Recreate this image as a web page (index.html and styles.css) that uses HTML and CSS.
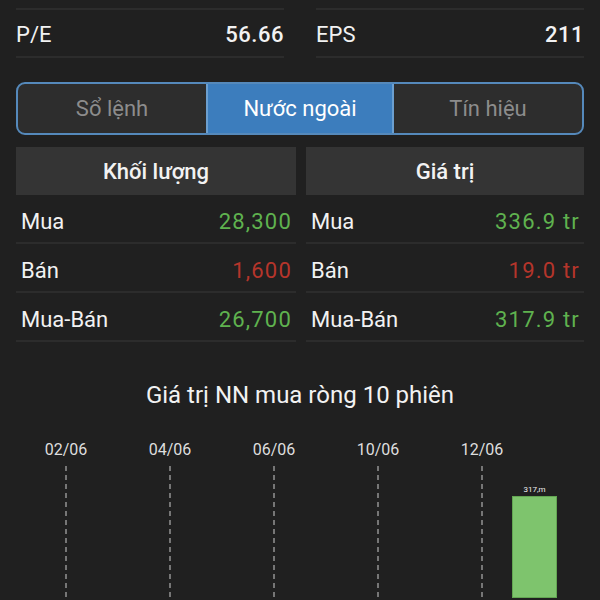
FILE: index.html
```html
<!DOCTYPE html>
<html lang="vi">
<head>
    <meta charset="UTF-8">
    <meta name="viewport" content="width=device-width, initial-scale=1.0">
    <title>Nước ngoài</title>
    <link rel="stylesheet" href="styles.css">
</head>
<body>
    <div class="stats">
        <div class="stat">
            <span>P/E</span>
            <b>56.66</b>
        </div>
        <div class="stat">
            <span>EPS</span>
            <b>211</b>
        </div>
    </div>

    <div class="tabs">
        <div class="tab">Sổ lệnh</div>
        <div class="tab active">Nước ngoài</div>
        <div class="tab">Tín hiệu</div>
    </div>

    <div class="foreign">
        <div class="col">
            <div class="head">Khối lượng</div>
            <div class="row"><span>Mua</span><span class="up">28,300</span></div>
            <div class="row"><span>Bán</span><span class="down">1,600</span></div>
            <div class="row"><span>Mua-Bán</span><span class="up">26,700</span></div>
        </div>
        <div class="col">
            <div class="head">Giá trị</div>
            <div class="row"><span>Mua</span><span class="up">336.9 tr</span></div>
            <div class="row"><span>Bán</span><span class="down">19.0 tr</span></div>
            <div class="row"><span>Mua-Bán</span><span class="up">317.9 tr</span></div>
        </div>
    </div>

    <h3 class="chart-title">Giá trị NN mua ròng 10 phiên</h3>
    <div class="chart">
        <div class="day"><p>02/06</p><i></i></div>
        <div class="day"><p>04/06</p><i></i></div>
        <div class="day"><p>06/06</p><i></i></div>
        <div class="day"><p>10/06</p><i></i></div>
        <div class="day"><p>12/06</p><i></i></div>
        <div class="bar" style="height: 102px;">
            <span>317,m</span>
        </div>
    </div>
</body>
</html>
```

FILE: styles.css
```css
* {
    padding: 0;
    margin: 0;
    box-sizing: border-box;
}
body {
    background-color: #202020;
    color: #f2f2f2;
    font-family: Roboto, "Noto Sans", sans-serif;
    width: 600px;
    height: 600px;
    overflow: hidden;
}
.stats {
    display: grid;
    grid-template-columns: 1fr 1fr;
    column-gap: 32px;
    padding: 0 16px;
    margin-top: 8px;
}
.stat {
    display: flex;
    justify-content: space-between;
    align-items: center;
    height: 50px;
    padding-top: 2px;
    border-top: 2px solid #2c2c2c;
    border-bottom: 2px solid #2c2c2c;
    font-size: 22px;
}
.stat b {
    font-weight: 500;
    letter-spacing: 0.5px;
}
.tabs {
    display: grid;
    grid-template-columns: 1fr 1fr 1fr;
    margin: 24px 16px 0;
    height: 53px;
    border: 2px solid #5589bb;
    border-radius: 9px;
    overflow: hidden;
    background-color: #2d2d2d;
}
.tab {
    display: flex;
    align-items: center;
    justify-content: center;
    font-size: 22px;
    color: #8c8c8c;
}
.tab.active {
    background-color: #3c7dbd;
    color: #fff;
    border-left: 2px solid #6c9fcf;
    border-right: 2px solid #6c9fcf;
}
.foreign {
    display: grid;
    grid-template-columns: 280px 1fr;
    column-gap: 10px;
    padding: 0 16px;
    margin-top: 12px;
}
.head {
    height: 48px;
    background-color: #343434;
    display: flex;
    align-items: center;
    justify-content: center;
    font-size: 22px;
    font-weight: 500;
}
.row {
    display: flex;
    justify-content: space-between;
    align-items: center;
    height: 49px;
    padding: 6px 5px 0;
    border-bottom: 2px solid #2c2c2c;
    font-size: 22px;
}
.up,
.down {
    letter-spacing: 1.2px;
    margin-right: -1px;
}
.up {
    color: #5fb24f;
}
.down {
    color: #b5352b;
}
.chart-title {
    text-align: center;
    font-size: 24px;
    font-weight: 400;
    margin-top: 38px;
    line-height: 30px;
}
.chart {
    position: relative;
    display: flex;
    padding-left: 14px;
    margin-top: 30px;
    height: 158px;
}
.day {
    width: 104px;
    display: flex;
    flex-direction: column;
    align-items: center;
}
.day p {
    font-size: 16px;
    line-height: 20px;
    color: #dedede;
}
.day i {
    display: block;
    width: 2px;
    height: 132px;
    margin-top: 6px;
    background: repeating-linear-gradient(to bottom, #767676 0 5px, transparent 5px 9px);
}
.bar {
    position: absolute;
    left: 512px;
    top: 56px;
    width: 45px;
    background-color: #7ec46d;
    border: 1px solid #63a552;
}
.bar span {
    position: absolute;
    top: -12px;
    left: 0;
    right: 0;
    text-align: center;
    font-size: 8px;
    color: #eee;
}
```
